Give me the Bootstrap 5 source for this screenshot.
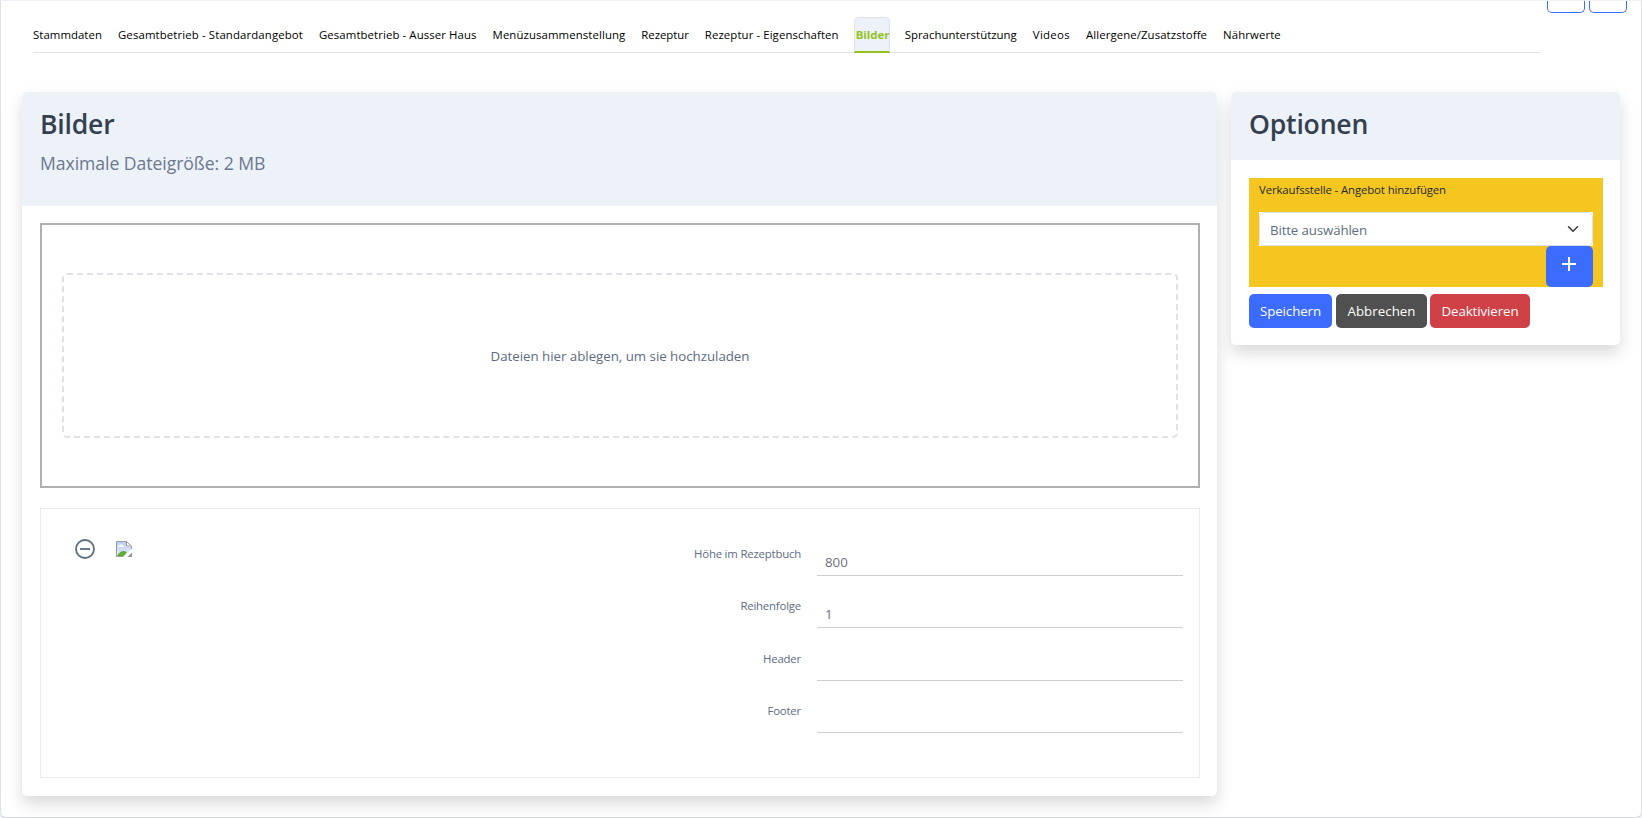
<!DOCTYPE html>
<html lang="de">
<head>
<meta charset="utf-8">
<meta name="viewport" content="width=device-width, initial-scale=1">
<title>Bilder</title>
<link href="https://cdn.jsdelivr.net/npm/bootstrap@5.3.0/dist/css/bootstrap.min.css" rel="stylesheet">
<style>
body { font-family: "Open Sans", sans-serif; font-size: 13.3px; line-height: 20px; color: #5e6b82; background: #edf2f9; height: 818px; overflow: hidden; }
.page-panel { height: 818px; border: 1px solid #dee2e6; border-top-color: #edf2f9; border-bottom-color: #d5d6da; border-radius: 0 0 6px 6px; background: #fff; padding: 0 20px 0 21px; }
.top-row { height: 91px; padding-left: 11px; }
.tab-list { width: 1507px; height: 36px; margin-top: 16px; gap: 16px; border-bottom: 1px solid #dee2e6; font-size: 11.4px; }
.tab-list .nav-link { height: 36px; padding: 8px 0 0; line-height: 20px; color: #000; border: 0; white-space: nowrap; letter-spacing: .09px; }
.tab-list .nav-link.active { width: 36px; margin: 0 -1px; padding: 7px 0 0 1px; border: 1px solid #dee2e6; border-bottom: 2px solid #95c11f; border-radius: 5px 5px 0 0; background: #edf2f9; color: #95c11f; font-weight: 700; letter-spacing: 0; }
.tab-list .nav-item:nth-child(1) .nav-link { letter-spacing: .05px; }
.tab-list .nav-item:nth-child(2) .nav-link { letter-spacing: .12px; }
.tab-list .nav-item:nth-child(5) .nav-link { letter-spacing: -.04px; }
.tab-list .nav-item:nth-child(8) .nav-link { letter-spacing: .02px; }
.tab-list .nav-item:nth-child(9) .nav-link { letter-spacing: .3px; }
.tool-btns { gap: 4px; margin-right: -6px; }
.tool-btn { width: 38px; height: 12px; padding: 0; border: 1px solid #3c6bff; border-top: 0; border-radius: 0 0 5px 5px; }
.panels { gap: 14px; }
.panel { border: 0; border-radius: 5px; box-shadow: 0 8px 16px rgba(0, 0, 0, .15); }
.panel .card-header { border: 0; background: #edf2f9; padding: 14px 18px 0; }
.panel-main { width: 1195px; height: 704px; }
.panel-main .card-header { height: 114px; flex-shrink: 0; }
.panel-side { width: 389px; height: 253px; }
.panel-side .card-header { height: 68px; }
.panel h2 { margin: 0; font-size: 26.6px; line-height: 36px; font-weight: 600; color: #344050; letter-spacing: -.2px; }
.subline { margin-top: 9px; font-size: 17.6px; line-height: 24px; color: #6b788e; letter-spacing: -.05px; }
.panel-main .card-body { padding: 17px 17px 18px 18px; }
.drop-frame { height: 265px; border: 2px solid #b0b0b0; padding: 48px 20px; }
.drop-zone { height: 165px; border: 2px dashed #dfe1e8; border-radius: 5px; letter-spacing: -.02px; }
.image-box { height: 270px; margin-top: 20px; border: 1px solid #ebebeb; padding: 30px 16px 0 34px; }
.image-icons { gap: 21px; }
.field-rows { width: 521px; padding-top: 3px; font-size: 11.4px; letter-spacing: -.2px; }
.field-row { height: 52.4px; gap: 16px; }
.field-row label { padding-top: 2px; line-height: 20px; }
.field-row .form-control { width: 366px; height: 34px; padding: 7px 8px 0; border: 0; border-bottom: 1px solid #cfcfcf; border-radius: 0; background: transparent; font-size: 13.3px; line-height: 20px; color: #6b7280; letter-spacing: 0; }
.panel-side .card-body { padding: 18px 17px 0 18px; }
.offer-box { height: 109px; padding: 2px 10px 0; background: #f5c61f; }
.offer-box label { font-size: 11.4px; line-height: 20px; color: #232a33; letter-spacing: -.12px; }
.select-wrap { height: 34px; margin-top: 12px; background: #fff; }
.offer-box .form-select { height: 34px; padding: 7px 30px 5px 10px; border: 1px solid #d8e2ef; border-radius: 5px; font-family: inherit; font-size: 13.3px; line-height: 20px; color: #5e6e82; letter-spacing: -.14px; background-position: right 13px top 10px; background-size: 12px; }
.add-btn { width: 47px; height: 41px; padding: 0; border: 0; border-radius: 5px; background: #3c6bff; }
.add-btn svg { margin: -8px 0 0 -1px; }
.action-row { margin-top: 7px; }
.action-row .btn { height: 34px; padding: 1px 0 0; border: 0; border-radius: 5px; color: #fff; font-size: 13.3px; line-height: 33px; letter-spacing: -.09px; }
.btn-save { width: 83px; background: #3c6bff; }
.btn-cancel { width: 91px; margin-left: 4px; background: #505050; }
.btn-off { width: 100px; margin-left: 3px; background: #cf4147; }
.action-row .btn-cancel { letter-spacing: .03px; }
</style>
</head>
<body>
<main class="page-panel">
  <div class="top-row d-flex justify-content-between align-items-start">
    <ul class="nav tab-list flex-nowrap">
      <li class="nav-item"><a class="nav-link" href="#">Stammdaten</a></li>
      <li class="nav-item"><a class="nav-link" href="#">Gesamtbetrieb - Standardangebot</a></li>
      <li class="nav-item"><a class="nav-link" href="#">Gesamtbetrieb - Ausser Haus</a></li>
      <li class="nav-item"><a class="nav-link" href="#">Menüzusammenstellung</a></li>
      <li class="nav-item"><a class="nav-link" href="#">Rezeptur</a></li>
      <li class="nav-item"><a class="nav-link" href="#">Rezeptur - Eigenschaften</a></li>
      <li class="nav-item"><a class="nav-link active" href="#">Bilder</a></li>
      <li class="nav-item"><a class="nav-link" href="#">Sprachunterstützung</a></li>
      <li class="nav-item"><a class="nav-link" href="#">Videos</a></li>
      <li class="nav-item"><a class="nav-link" href="#">Allergene/Zusatzstoffe</a></li>
      <li class="nav-item"><a class="nav-link" href="#">Nährwerte</a></li>
    </ul>
    <div class="tool-btns d-flex">
      <button class="btn tool-btn" type="button"></button>
      <button class="btn tool-btn" type="button"></button>
    </div>
  </div>

  <div class="panels d-flex align-items-start">
    <section class="card panel panel-main">
      <div class="card-header">
        <h2>Bilder</h2>
        <div class="subline">Maximale Dateigröße: 2 MB</div>
      </div>
      <div class="card-body">
        <div class="drop-frame">
          <div class="drop-zone d-flex align-items-center justify-content-center">Dateien hier ablegen, um sie hochzuladen</div>
        </div>
        <div class="image-box d-flex justify-content-between align-items-start">
          <div class="image-icons d-flex align-items-center">
            <svg width="20" height="20" viewBox="0 0 20 20" fill="none" stroke="#5e6e82" stroke-width="1.8"><circle cx="10" cy="10" r="9"/><path d="M5 10h10"/></svg>
            <svg width="16" height="16" viewBox="0 0 16 16">
              <defs><linearGradient id="sky" x1="0" y1="0" x2="0" y2="1"><stop offset="0" stop-color="#bccff2"/><stop offset="1" stop-color="#e4ebfb"/></linearGradient></defs>
              <path d="M.5.5h10l5 5v10H.5z" fill="#fff" stroke="#999"/>
              <path d="M1 1h9v5h5v9H1z" fill="url(#sky)"/>
              <path d="M2 6a1.500 1.500 0 0 1 1.500-1.800 2 2 0 0 1 3.200 0A1.300 1.300 0 0 1 7.500 6z" fill="#fff"/>
              <path d="M1 15C3 11.500 5 10 7.500 10s4 1.500 7 5z" fill="#5fab3b"/>
              <path d="M10.500.5v4.500h5z" fill="#fff" stroke="#999"/>
              <path d="M16 7.500V12l-4.500 4H7l4-4.500 2-1.200z" fill="#fff"/>
              <path d="M12.500 15.500h3v-3z" fill="#6bae49" stroke="#999"/>
            </svg>
          </div>
          <div class="field-rows">
            <div class="field-row d-flex justify-content-end"><label for="f1">Höhe im Rezeptbuch</label><input class="form-control" id="f1" value="800"></div>
            <div class="field-row d-flex justify-content-end"><label for="f2">Reihenfolge</label><input class="form-control" id="f2" value="1"></div>
            <div class="field-row d-flex justify-content-end"><label for="f3">Header</label><input class="form-control" id="f3"></div>
            <div class="field-row d-flex justify-content-end"><label for="f4">Footer</label><input class="form-control" id="f4"></div>
          </div>
        </div>
      </div>
    </section>

    <aside class="card panel panel-side">
      <div class="card-header"><h2>Optionen</h2></div>
      <div class="card-body">
        <div class="offer-box">
          <label class="d-block" for="offer">Verkaufsstelle - Angebot hinzufügen</label>
          <div class="select-wrap">
            <select class="form-select" id="offer"><option>Bitte auswählen</option></select>
          </div>
          <div class="d-flex justify-content-end">
            <button class="btn add-btn" type="button" aria-label="Hinzufügen"><svg width="14" height="14" viewBox="0 0 14 14" stroke="#fff" stroke-width="2"><path d="M0 7h14M7 0v14"/></svg></button>
          </div>
        </div>
        <div class="action-row d-flex">
          <button class="btn btn-save" type="button">Speichern</button>
          <button class="btn btn-cancel" type="button">Abbrechen</button>
          <button class="btn btn-off" type="button">Deaktivieren</button>
        </div>
      </div>
    </aside>
  </div>
</main>
<script src="https://cdn.jsdelivr.net/npm/bootstrap@5.3.0/dist/js/bootstrap.bundle.min.js"></script>
</body>
</html>
